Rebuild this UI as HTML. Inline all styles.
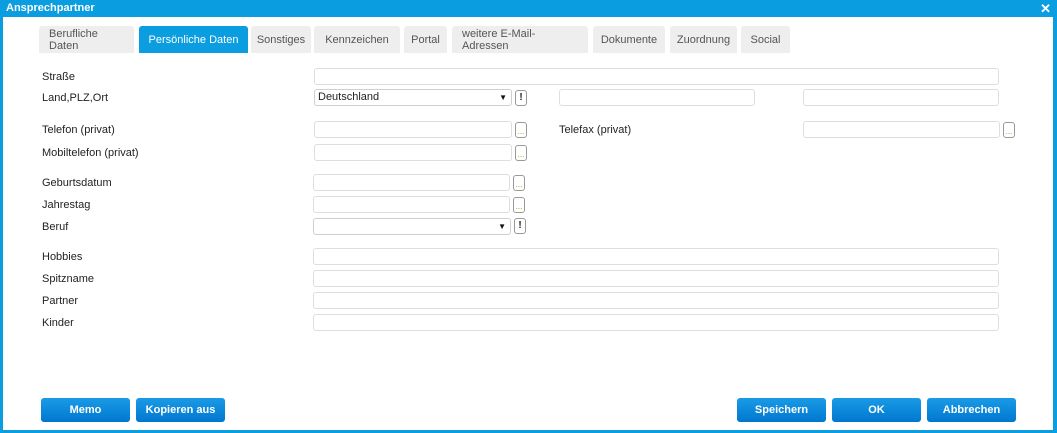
<!DOCTYPE html>
<html><head><meta charset="utf-8"><style>
*{box-sizing:border-box;margin:0;padding:0}
body{width:1057px;height:433px;overflow:hidden;background:#fff;font-family:"Liberation Sans",Arial,sans-serif;font-size:11px;color:#222;position:relative}
.frame{position:absolute;left:0;top:0;width:1057px;height:433px;border:3px solid #0a9de0;border-top:0;border-right-width:4px}
.title{position:absolute;left:0;top:0;width:1057px;height:17px;background:#0a9de0;color:#fff;font-weight:bold;font-size:11px;padding:2px 6px}
.x{position:absolute;right:6px;top:1px;color:#fff;font-weight:bold;font-size:13px}
.tab{position:absolute;top:26px;height:27px;background:#eeeeee;color:#555;border-radius:3px 3px 0 0;font-size:11px;display:flex;align-items:center;justify-content:center;line-height:12px}
.tab.a{background:#0a9de0;color:#fff}
.tab.l{justify-content:flex-start;padding-left:10px}
.lab{position:absolute;left:42px;font-size:11px}
.in{position:absolute;height:17px;border:1px solid #dedede;border-radius:3px;background:#fff}
.sel{position:absolute;height:17px;border:1px solid #cfcfcf;border-radius:3px;background:#fff;font-size:11px;padding:0 3px;line-height:15px}
.sel:after{content:"▼";position:absolute;right:4px;top:0;font-size:8px;color:#111}
.sb{position:absolute;width:12px;height:16px;border:1px solid #999;border-radius:3px;background:#fff;font-size:9px;text-align:center;line-height:14px;color:#444}
.sb.d{color:#b58a00;line-height:18px;font-size:8px}
.sb.e{font-weight:bold;color:#222;font-size:10px}
.btn{position:absolute;top:398px;width:89px;height:24px;border-radius:3px;background:linear-gradient(#1a9be6,#0077cf);color:#fff;font-size:11px;font-weight:bold;text-align:center;line-height:24px}
</style></head><body>
<div class="frame"></div>
<div class="title">Ansprechpartner<span class="x">✕</span></div>
<div class="tab l" style="left:39px;width:95px">Berufliche<br>Daten</div>
<div class="tab a" style="left:139px;width:109px">Persönliche Daten</div>
<div class="tab" style="left:251px;width:60px">Sonstiges</div>
<div class="tab" style="left:314px;width:86px">Kennzeichen</div>
<div class="tab" style="left:404px;width:43px">Portal</div>
<div class="tab l" style="left:452px;width:136px">weitere E-Mail-<br>Adressen</div>
<div class="tab" style="left:593px;width:72px">Dokumente</div>
<div class="tab" style="left:670px;width:67px">Zuordnung</div>
<div class="tab" style="left:741px;width:49px">Social</div>

<div class="lab" style="top:71px">Straße</div>
<div class="in" style="left:314px;top:68px;width:685px"></div>
<div class="lab" style="top:92px">Land,PLZ,Ort</div>
<div class="sel" style="left:314px;top:89px;width:198px">Deutschland</div>
<div class="sb e" style="left:515px;top:90px">!</div>
<div class="in" style="left:559px;top:89px;width:196px"></div>
<div class="in" style="left:803px;top:89px;width:196px"></div>

<div class="lab" style="top:124px">Telefon (privat)</div>
<div class="in" style="left:314px;top:121px;width:198px"></div>
<div class="sb d" style="left:515px;top:122px">...</div>
<div class="lab" style="left:559px;top:124px">Telefax (privat)</div>
<div class="in" style="left:803px;top:121px;width:197px"></div>
<div class="sb d" style="left:1003px;top:122px">...</div>
<div class="lab" style="top:147px">Mobiltelefon (privat)</div>
<div class="in" style="left:314px;top:144px;width:198px"></div>
<div class="sb d" style="left:515px;top:145px">...</div>

<div class="lab" style="top:177px">Geburtsdatum</div>
<div class="in" style="left:313px;top:174px;width:197px"></div>
<div class="sb d" style="left:513px;top:175px">...</div>
<div class="lab" style="top:199px">Jahrestag</div>
<div class="in" style="left:313px;top:196px;width:197px"></div>
<div class="sb d" style="left:513px;top:197px">...</div>
<div class="lab" style="top:221px">Beruf</div>
<div class="sel" style="left:313px;top:218px;width:198px"></div>
<div class="sb e" style="left:514px;top:218px">!</div>

<div class="lab" style="top:251px">Hobbies</div>
<div class="in" style="left:313px;top:248px;width:686px"></div>
<div class="lab" style="top:273px">Spitzname</div>
<div class="in" style="left:313px;top:270px;width:686px"></div>
<div class="lab" style="top:295px">Partner</div>
<div class="in" style="left:313px;top:292px;width:686px"></div>
<div class="lab" style="top:317px">Kinder</div>
<div class="in" style="left:313px;top:314px;width:686px"></div>

<div class="btn" style="left:41px">Memo</div>
<div class="btn" style="left:136px">Kopieren aus</div>
<div class="btn" style="left:737px">Speichern</div>
<div class="btn" style="left:832px">OK</div>
<div class="btn" style="left:927px">Abbrechen</div>
</body></html>
